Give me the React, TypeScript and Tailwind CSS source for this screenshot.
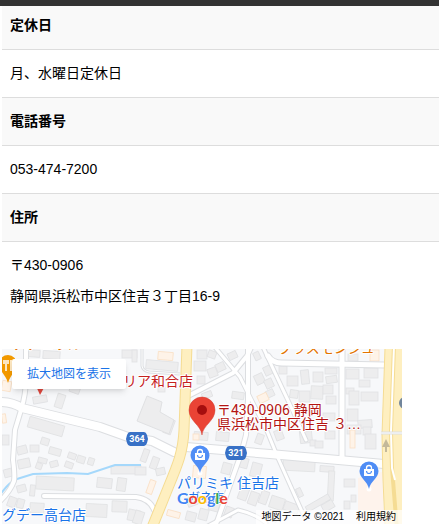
import React from 'react';

const JP = '"Liberation Sans", "Noto Sans CJK JP", sans-serif';

// x, y, width, height, rotation
const buildings: number[][] = [
  [28, 350, 12, 7, 4], [43, 351, 17, 8, 4], [122, 350, 15, 8, 0],
  [33, 396, 14, 7, -10], [56, 394, 8, 14, 18], [70, 385, 10, 8, 20],
  [28, 421, 36, 11, 16], [132, 350, 5, 12, 0],
  [146, 361, 32, 9, 5], [158, 387, 7, 5, 0],
  [165, 419, 8, 15, 20], [2, 435, 7, 10, 0], [17, 446, 10, 8, -15],
  [30, 445, 9, 7, 0], [41, 438, 8, 7, 18], [49, 448, 12, 7, 16],
  [18, 459, 12, 9, -12], [4, 469, 8, 8, -15], [38, 458, 9, 5, 15],
  [50, 461, 8, 6, -15], [36, 463, 6, 6, 20], [65, 462, 8, 6, 20],
  [68, 453, 8, 6, 20], [77, 456, 8, 7, 18], [88, 458, 6, 7, 18],
  [17, 485, 9, 7, -15], [36, 477, 38, 13, 3], [30, 485, 5, 11, 6],
  [8, 497, 8, 10, 20], [17, 499, 7, 9, 15], [30, 503, 14, 10, 3],
  [86, 504, 21, 13, 3], [111, 466, 30, 8, 0], [117, 478, 9, 13, 8],
  [97, 478, 15, 10, 6], [112, 501, 15, 11, 2], [128, 510, 12, 11, 12],
  [142, 449, 6, 13, 20], [151, 457, 7, 12, 20], [156, 468, 9, 7, -12],
  [135, 467, 11, 8, 0], [134, 511, 9, 13, 18],
  [194, 361, 12, 10, 0], [197, 350, 10, 9, 0], [208, 351, 8, 7, 20],
  [216, 363, 9, 8, -25], [197, 376, 8, 8, 0], [208, 368, 9, 9, -20],
  [202, 392, 10, 6, -20], [232, 392, 12, 7, 8],
  [264, 366, 8, 9, -25], [255, 374, 9, 10, -25], [265, 379, 8, 9, -25],
  [266, 390, 8, 7, -25], [254, 352, 6, 8, -25], [228, 352, 9, 7, -25],
  [194, 432, 14, 8, 5], [216, 432, 13, 9, 5],
  [279, 366, 8, 8, 0], [287, 376, 11, 10, 0], [301, 370, 8, 14, -6],
  [313, 372, 10, 10, 0], [325, 368, 12, 6, 0], [326, 376, 11, 7, -8],
  [290, 390, 8, 8, 8], [299, 391, 11, 11, 0], [311, 386, 12, 13, 3],
  [323, 385, 10, 9, 0], [326, 396, 10, 8, 0], [348, 354, 10, 7, 0],
  [346, 369, 13, 10, 0], [364, 368, 14, 10, 0], [359, 380, 11, 7, 0],
  [346, 388, 8, 6, 0], [349, 391, 10, 14, 0], [361, 392, 17, 9, 0],
  [347, 409, 11, 12, 0], [358, 420, 14, 8, -4], [347, 425, 14, 9, 0],
  [323, 413, 12, 8, 0], [363, 427, 8, 8, 0], [300, 431, 12, 12, -6],
  [310, 440, 6, 6, 0], [315, 441, 8, 7, 0], [325, 431, 10, 8, 0],
  [365, 434, 11, 15, 0], [275, 430, 8, 10, -20],
  [256, 434, 7, 10, 20], [222, 463, 9, 11, 15],
  [240, 458, 8, 10, 15], [251, 463, 10, 14, 15],
  [187, 497, 10, 9, -20], [199, 509, 9, 11, 15],
  [209, 503, 10, 8, 15], [186, 512, 10, 9, 15],
  [239, 487, 9, 13, 20], [249, 492, 9, 13, 20], [260, 491, 8, 13, 20],
  [225, 507, 8, 10, 20], [283, 459, 32, 12, 3],
  [320, 466, 14, 6, 4], [328, 471, 6, 30, 3], [344, 479, 11, 8, 0],
  [297, 488, 5, 9, -25], [305, 500, 26, 6, -30], [344, 501, 6, 8, 0],
  [351, 495, 5, 7, 0], [270, 497, 14, 12, 18], [284, 503, 15, 9, 20],
  [322, 502, 12, 8, -30], [268, 511, 10, 10, 20],
];

const shops: number[][] = [
  [158, 352, 15, 8, 5], [2, 381, 9, 10, 10], [2, 414, 4, 9, -8],
  [258, 394, 10, 8, -25], [193, 434, 6, 6, 0], [193, 466, 13, 12, 5],
  [148, 480, 6, 14, 20], [167, 511, 13, 6, 15], [370, 350, 9, 11, 0],
  [350, 430, 5, 18, 0],
];

const roads: { d: string; w: number }[] = [
  { d: 'M0 402 Q12 402 22 408 L100 427 L128 437 L152 441 L174 452', w: 8 },
  { d: 'M26 347 L26 378 Q26 394 21 410 L15 430 L13 460 Q15 474 14 481 Q10 492 -2 503', w: 4 },
  { d: 'M44 496 L136 497 Q150 499 154 510', w: 4 },
  { d: 'M186 447 L270 454 L384 464', w: 8 },
  { d: 'M188 396 L233 373 L247 356 Q250 350 252 345', w: 4 },
  { d: 'M213 345 L240 377 L252 401 L267 431 L278 458 L304 516', w: 3 },
  { d: 'M248 345 L248 400 L246 435 L241 454 L214 530', w: 4 },
  { d: 'M262 345 L292 409 L306 440', w: 3 },
  { d: 'M268 356 Q272 363 282 363 L384 365', w: 5 },
  { d: 'M342 345 L342 458', w: 5 },
  { d: 'M208 526 L238 510 Q256 514 266 523', w: 3 },
];

const Blocks = ({ items, fill, stroke }: { items: number[][]; fill: string; stroke: string }) => (
  <g fill={fill} stroke={stroke} strokeWidth="0.8">
    {items.map(([x, y, w, h, r], i) => (
      <rect key={i} x={x} y={y} width={w} height={h} transform={`rotate(${r} ${x + w / 2} ${y + h / 2})`} />
    ))}
  </g>
);

const ShopPin = ({ x, y }: { x: number; y: number }) => (
  <g transform={`translate(${x} ${y})`}>
    <circle cx="0" cy="18" r="2.5" fill="#fff" />
    <path d="M0 18 C-1.5 10 -9.5 7 -9.5 0 A9.5 9.5 0 0 1 9.5 0 C9.5 7 1.5 10 0 18Z" fill="#4f8df5" />
    <path d="M-5 -2 H5 V5 H-5Z" fill="#fff" />
    <path d="M-2.5 -1 V-3 A2.5 2.5 0 0 1 2.5 -3 V-1" fill="none" stroke="#fff" strokeWidth="1.3" />
    <path d="M-2.5 0 A2.5 2.5 0 0 0 2.5 0" fill="none" stroke="#4f8df5" strokeWidth="1.2" />
  </g>
);

const RouteBadge = ({ x, y, label }: { x: number; y: number; label: string }) => (
  <g transform={`translate(${x} ${y})`}>
    <path d="M-7 -7 H7 Q9 -7 10 -4 L11 0 L10 4 Q9 7 7 7 H-7 Q-9 7 -10 4 L-11 0 L-10 -4 Q-9 -7 -7 -7Z" fill="#3871c6" />
    <text y="3" fontSize="9" fontWeight="700" fill="#fff" textAnchor="middle" fontFamily="Roboto, sans-serif">
      {label}
    </text>
  </g>
);

const MapDrawing = () => (
  <svg className="block" width="400" height="175" viewBox="2 349 400 175" fontFamily={JP}>
    <rect x="2" y="349" width="400" height="175" fill="#f7f8fa" />
    <path d="M358 478 L382 472 L384 524 L358 524Z" fill="#fef3ec" />

    <Blocks items={buildings} fill="#ededee" stroke="#e0e1e3" />
    <path
      d="M147 396 L162 402 L160 412 L174 420 L169 434 L137 421Z"
      fill="#ededee"
      stroke="#e0e1e3"
    />
    <Blocks items={shops} fill="#fef3e8" stroke="#f9dfc5" />

    <path
      d="M0 495 Q8 483 17 479 L33 474 L67 473 L88 474 L115 465 L141 465"
      fill="none"
      stroke="#a5d8fb"
      strokeWidth="2"
    />

    {/* Street casings first, then the fill on top */}
    <g fill="none" stroke="#dcdee1" strokeLinecap="round" strokeLinejoin="round">
      {roads.map((r) => (
        <path key={r.d} d={r.d} strokeWidth={r.w + 2} />
      ))}
    </g>
    <g fill="none" stroke="#fff" strokeLinecap="round" strokeLinejoin="round">
      {roads.map((r) => (
        <path key={r.d} d={r.d} strokeWidth={r.w} />
      ))}
    </g>
    <path d="M142 347 V366 Q143 371 149 372 L180 374" fill="none" stroke="#dcdee1" strokeWidth="3" />
    <path d="M142 347 V366 Q143 371 149 372 L180 374" fill="none" stroke="#fff" strokeWidth="1" />

    {/* Main roads */}
    <path d="M187 345 L184 430 C183 452 178 464 168 488 L151 530" fill="none" stroke="#f5dc93" strokeWidth="11" />
    <path d="M187 345 L184 430 C183 452 178 464 168 488 L151 530" fill="none" stroke="#feefc0" strokeWidth="9" />
    <path d="M385 348 L382 435 L383 480 L385 525 H403 V348Z" fill="#feefc0" stroke="#f5dc93" />
    <path d="M394 345 L391 432 L392 468 L397 530" fill="none" stroke="#f5dc93" strokeWidth="4" />
    <path d="M394 345 L391 432 L392 468 L395 480" fill="none" stroke="#fff" strokeWidth="2" />
    <path d="M381 433 H402" stroke="#dcdee1" strokeWidth="3" />
    <path d="M381 433 H402" stroke="#fff" strokeWidth="1" />
    <path d="M386 452 V445" stroke="#c4b99a" strokeWidth="2" />
    <path d="M382 447 L386 439 L390 447Z" fill="#c4b99a" />
    <circle cx="405" cy="403" r="6" fill="#71859b" />

    {/* Place names */}
    <g fontSize="14" stroke="#fff" strokeWidth="2" paintOrder="stroke" strokeLinejoin="round">
      <text x="12" y="349" fill="#e37400">ナチュラル</text>
      <text x="278" y="353" fill="#e37400">プラスモンジュ</text>
      <text x="123" y="386" fill="#c5221f">リア和合店</text>
      <text x="188" y="502" fontSize="12" fill="#1a73e8">ガネ店</text>
      <text x="177" y="488" fill="#1a73e8">パリミキ 住吉店</text>
      <text x="2" y="520" fill="#1a73e8">グデー高台店</text>
    </g>

    <path d="M-1 364 A9 9 0 0 1 17 364 C17 371 10 375 8 383 C6 375 -1 371 -1 364Z" fill="#f29900" />
    <path d="M4 360 V364 M6 360 V364 M8 360 V364 M6 364 V371 M11 360 V371" stroke="#fff" strokeWidth="1.5" />
    <path d="M36 386 H45 L40 395Z" fill="#e0483e" />

    <RouteBadge x={137} y={439} label="364" />
    <RouteBadge x={236} y={453} label="321" />
    <ShopPin x={200} y={455} />
    <ShopPin x={369} y={471} />

    <path
      d="M202 435 C201 425 189 421 189 410 A13 13 0 0 1 215 410 C215 421 203 425 202 435Z"
      fill="#ea4335"
      stroke="#d33b2e"
      strokeWidth="0.5"
    />
    <circle cx="202" cy="410" r="5" fill="#a50e0e" />
    <g fontSize="14" fill="#b31412" stroke="#fff" strokeWidth="2" paintOrder="stroke" strokeLinejoin="round">
      <text x="217" y="415">
        〒<tspan fontFamily="Roboto">430-0906</tspan> 静岡
      </text>
      <text x="217" y="429">県浜松市中区住吉 ３…</text>
    </g>

    <text
      x="177"
      y="504"
      fontSize="16"
      fontWeight="700"
      fontFamily="Lato, sans-serif"
      stroke="#fff"
      strokeWidth="1"
      paintOrder="stroke"
    >
      <tspan fill="#4285f4">G</tspan>
      <tspan fill="#ea4335">o</tspan>
      <tspan fill="#fbbc05">o</tspan>
      <tspan fill="#4285f4">g</tspan>
      <tspan fill="#34a853">l</tspan>
      <tspan fill="#ea4335">e</tspan>
    </text>
  </svg>
);

const sections = [
  { title: '定休日', lines: ['月、水曜日定休日'] },
  { title: '電話番号', lines: ['053-474-7200'] },
  { title: '住所', lines: ['〒430-0906', '静岡県浜松市中区住吉３丁目16-9'] },
];

const App = () => {
  return (
    <div className="bg-white text-black text-sm font-['Liberation_Sans','Noto_Sans_CJK_JP',sans-serif]">
      <div className="sticky top-0 z-10 h-1.5 bg-[#333]" />

      <div className="-mt-1 pl-0.5">
        <dl>
          {sections.map((section, i) => (
            <React.Fragment key={section.title}>
              <dt className="px-2 py-2 leading-[31px] font-bold bg-[#f9f9f9] border-b border-[#ddd]">
                {section.title}
              </dt>
              <dd className={i < sections.length - 1 ? 'px-2 py-2 leading-[31px] border-b border-[#ddd]' : 'px-2 py-2 leading-[31px]'}>
                {section.lines.map((line) => (
                  <p key={line}>{line}</p>
                ))}
              </dd>
            </React.Fragment>
          ))}
        </dl>

        <div className="relative mt-[29px] w-full max-w-[400px] overflow-hidden">
          <MapDrawing />
          <a
            href="#map"
            className="absolute left-2.5 top-2.5 rounded-xs bg-white px-[15px] text-xs leading-[30px] text-[#1a73e8] shadow-md"
          >
            拡大地図を表示
          </a>
          <div className="absolute right-0 bottom-0 flex gap-3 bg-white/70 px-1.5 text-[10px] leading-[14px]">
            <span>地図データ ©2021</span>
            <a href="#terms">利用規約</a>
          </div>
        </div>
      </div>
    </div>
  );
};

export default App;
